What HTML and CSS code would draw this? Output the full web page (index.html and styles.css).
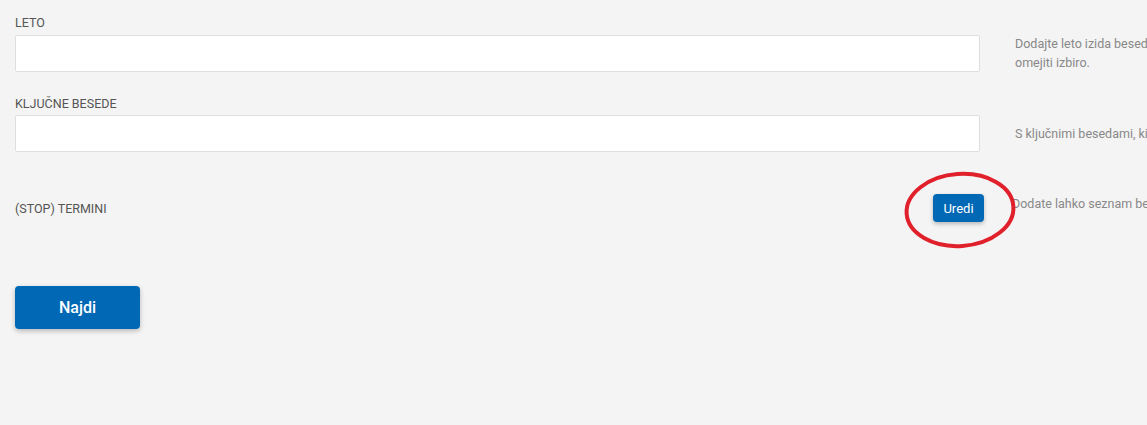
FILE: index.html
```html
<!DOCTYPE html>
<html lang="sl">
<head>
<meta charset="utf-8">
<title>Iskanje</title>
<link rel="stylesheet" href="styles.css">
</head>
<body>
<form class="form">
  <div class="row">
    <label class="label" for="leto">LETO</label>
    <input class="input" id="leto" type="text">
    <p class="help">Dodajte leto izida besedil, s katerim lahko dodatno<br>omejiti izbiro.</p>
  </div>
  <div class="row">
    <label class="label" for="kljucne">KLJUČNE BESEDE</label>
    <input class="input" id="kljucne" type="text">
    <p class="help">S ključnimi besedami, ki jih vpišete, omejite iskanje.</p>
  </div>
  <div class="row row-terms">
    <div class="terms">
      <span class="label-inline">(STOP) TERMINI</span>
      <span class="edit-wrap">
        <button type="button" class="btn-edit">Uredi</button>
        <svg class="circle" width="120" height="84" viewBox="0 0 120 84" aria-hidden="true">
          <ellipse cx="60" cy="42" rx="53.5" ry="36" fill="none" stroke="#e0202b" stroke-width="4" transform="rotate(-4 60 42)"/>
        </svg>
      </span>
    </div>
    <p class="help help-terms">Dodate lahko seznam besed, ki jih želite izključiti.</p>
  </div>
  <div class="actions">
    <button type="submit" class="btn-find">Najdi</button>
  </div>
</form>
</body>
</html>
```
FILE: styles.css
```css
html, body {
  margin: 0;
  padding: 0;
  overflow: hidden;
  background: #f4f4f4;
}
body {
  font-family: Roboto, "Liberation Sans", Arial, sans-serif;
  width: 1147px;
  height: 425px;
}
.form {
  padding: 14px 0 0 15px;
  width: 1400px;
}
.row {
  display: grid;
  grid-template-columns: 965px 340px;
  grid-template-areas:
    "label ."
    "input help";
  column-gap: 35px;
  align-items: center;
  margin-bottom: 23px;
}
.label {
  grid-area: label;
  font-size: 12.5px;
  line-height: 18px;
  color: #555;
  margin-bottom: 2px;
}
.input {
  grid-area: input;
  box-sizing: border-box;
  height: 37px;
  width: 965px;
  margin: 0;
  border: 1px solid #dcdfe0;
  border-radius: 2px;
  background: #fff;
  font: inherit;
}
.help {
  grid-area: help;
  margin: 0;
  font-size: 12.5px;
  line-height: 19px;
  color: #888;
}
.row-terms {
  grid-template-areas: "input help";
  margin-top: 42px;
  margin-bottom: 0;
}
.terms {
  grid-area: input;
  display: flex;
  align-items: center;
  justify-content: space-between;
  margin-right: -4px;
}
.label-inline {
  font-size: 12.5px;
  color: #555;
  line-height: 17px;
}
.edit-wrap {
  position: relative;
  display: inline-flex;
}
.btn-edit {
  width: 51px;
  height: 28px;
  border: 0;
  border-radius: 4px;
  background: #0068b5;
  color: #fff;
  font-family: Roboto, "Liberation Sans", Arial, sans-serif;
  font-size: 13px;
  font-weight: 400;
  padding: 0;
  box-shadow: 0 2px 4px rgba(0, 0, 0, 0.25);
}
.circle {
  position: absolute;
  left: 50%;
  top: 50%;
  margin-left: -59px;
  margin-top: -40px;
  pointer-events: none;
}
.help-terms {
  margin-left: -3px;
  margin-top: -10px;
}
.actions {
  margin-top: 64px;
}
.btn-find {
  width: 125px;
  height: 43px;
  border: 0;
  border-radius: 4px;
  background: #0068b5;
  color: #fff;
  font-family: Roboto, "Liberation Sans", Arial, sans-serif;
  font-size: 16px;
  font-weight: 500;
  box-shadow: 0 2px 5px rgba(0, 0, 0, 0.25);
}
```
